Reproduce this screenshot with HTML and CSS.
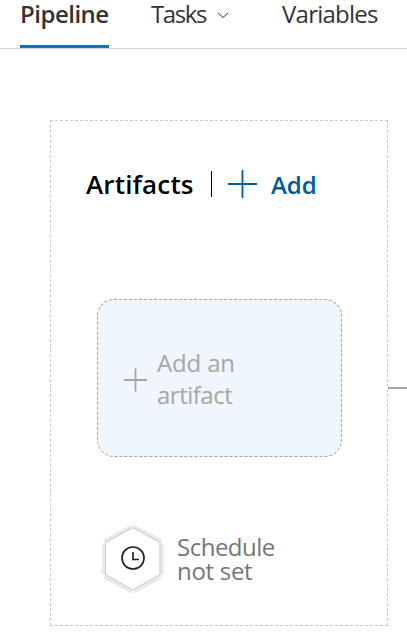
FILE: index.html
```html
<!DOCTYPE html>
<html lang="en">
<head>
<meta charset="utf-8">
<title>Pipeline</title>
<link rel="stylesheet" href="styles.css">
</head>
<body>
<nav class="tabs">
  <a class="tab tab-active"><span class="t-pipeline">Pipeline</span></a>
  <a class="tab tab-tasks"><span class="t-tasks">Tasks</span>
    <svg class="chevron" width="12" height="7" viewBox="0 0 12 7"><path d="M1 1l5 4.500L11 1" fill="none" stroke="#333" stroke-width="1"/></svg>
  </a>
  <a class="tab"><span class="t-variables">Variables</span></a>
</nav>
<main class="canvas">
  <section class="panel">
    <header class="panel-head">
      <h2 class="title">Artifacts</h2>
      <span class="divider"></span>
      <a class="add">
        <svg width="29" height="29" viewBox="0 0 29 29"><path d="M0 14h29M14.500 0v28" stroke="#005a9e" stroke-width="1.800"/></svg>
        <span class="add-label">Add</span>
      </a>
    </header>
    <div class="card">
      <svg class="card-plus" width="24" height="24" viewBox="0 0 24 24"><path d="M0 12h23M11.500 0.500v23" stroke="#a6a6a6" stroke-width="1.800"/></svg>
      <div class="card-text"><span class="t-addan">Add an</span><br><span class="t-artifact">artifact</span></div>
    </div>
    <div class="schedule">
      <svg class="hex" width="64" height="70" viewBox="0 0 64 70">
        <path d="M3 19.500v31M60.500 19.500v31M3.500 17.500L31.300 2.800M32.300 2.800l28 14.700M3.500 52.500L31.300 67.200M32.300 67.200l28-14.700" fill="none" stroke="#eaeaea" stroke-width="4.500"/>
        <path d="M31.800 3.500L59 18.500v32L31.800 66 4.500 50.500v-32z" fill="#fff" stroke="#c8c8c8" stroke-width="1"/>
        <circle cx="32" cy="34" r="11" fill="none" stroke="#222" stroke-width="1.700"/>
        <path d="M32 28v7.500h6" fill="none" stroke="#222" stroke-width="1.700"/>
      </svg>
      <div class="schedule-text"><span class="t-schedule">Schedule</span><br><span class="t-notset">not set</span></div>
    </div>
  </section>
  <span class="connector"></span>
</main>
</body>
</html>
```
FILE: styles.css
```css
* { box-sizing: border-box; }
body {
  margin: 0;
  width: 407px;
  height: 644px;
  overflow: hidden;
  background: #fff;
  font-family: "Open Sans", "Noto Sans", sans-serif;
  font-size: 24px;
  color: #333;
}
.tabs {
  display: flex;
  height: 49px;
  padding-left: 20px;
  border-bottom: 1px solid #d6d6d6;
}
.tab {
  display: flex;
  height: 48px;
  line-height: 28px;
  white-space: nowrap;
}
.tab-active {
  width: 89px;
  margin-right: 42px;
  border-bottom: 3px solid #0078d4;
  font-weight: 600;
}
.tab-tasks { width: 131px; }
.chevron { margin: 12px 53px 0 auto; }
.t-pipeline { letter-spacing: -0.5px; }
.t-tasks { letter-spacing: -1.4px; }
.t-variables { letter-spacing: -0.75px; }
.canvas {
  display: flex;
  align-items: flex-start;
  padding: 71px 0 0 50px;
}
.panel {
  flex: none;
  width: 338px;
  height: 506px;
  border: 1px dashed #c8c8c8;
  padding: 46px 0 0 35px;
}
.panel-head {
  display: flex;
  align-items: center;
  height: 34px;
}
.title {
  width: 125px;
  margin: 0;
  font-size: 26px;
  font-weight: 600;
  line-height: 34px;
  color: #000;
  letter-spacing: 0.15px;
}
.divider { width: 1px; height: 26px; background: #000; }
.add {
  display: flex;
  align-items: center;
  margin-left: 16px;
  gap: 14px;
  color: #005a9e;
  font-weight: 600;
}
.add-label { letter-spacing: 0; }
.card {
  display: flex;
  align-items: center;
  width: 245px;
  height: 158px;
  margin: 98px 0 0 11px;
  padding-left: 26px;
  border: 1px dashed #a6a6a6;
  border-radius: 17px;
  background: #eff6fc;
  color: #a6a6a6;
}
.card-plus { margin: 3px 9px 0 0; }
.card-text { padding-top: 2px; line-height: 32px; white-space: nowrap; }
.schedule {
  display: flex;
  margin: 67px 0 0 15px;
}
.hex { flex: none; }
.schedule-text {
  margin: 11px 0 0 12px;
  line-height: 24px;
  color: #767676;
  white-space: nowrap;
}
.t-addan { letter-spacing: -0.15px; }
.t-artifact, .t-schedule { letter-spacing: -0.5px; }
.t-notset { letter-spacing: -0.3px; }
.connector {
  width: 19px;
  height: 2px;
  margin-top: 267px;
  background: #a6a6a6;
}
```
